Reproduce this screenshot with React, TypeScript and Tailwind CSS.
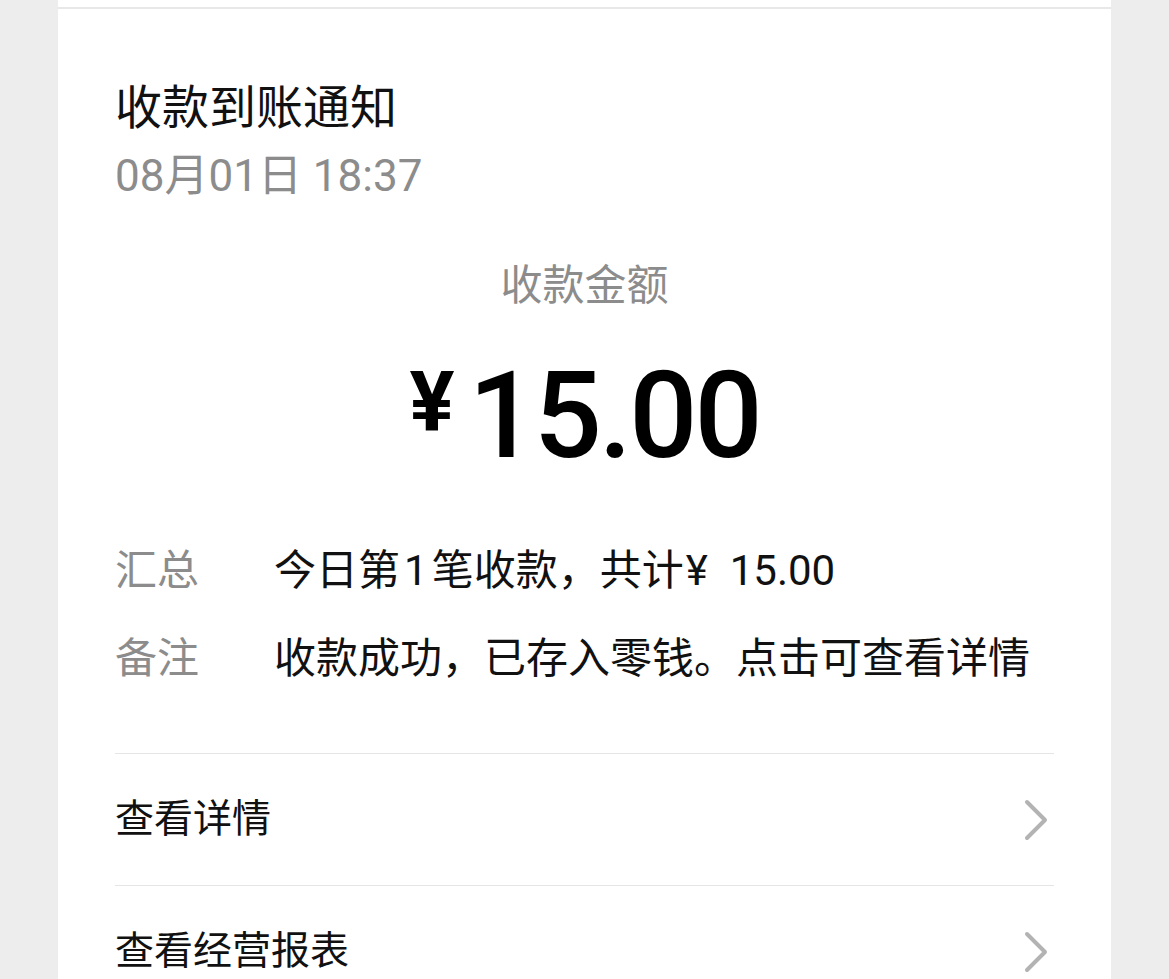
const font = "font-['Roboto','Noto_Sans_CJK_SC',sans-serif]";

function Chevron() {
  return (
    <svg width="26" height="42" viewBox="0 0 26 42" fill="none">
      <path d="M4 3 L22 21 L4 39" stroke="#b3b3b3" strokeWidth="4" strokeLinecap="round" strokeLinejoin="round" />
    </svg>
  );
}

function InfoRow({ label, children }: { label: string; children: React.ReactNode }) {
  return (
    <div className="flex h-[88px] items-center text-[42px]">
      <span className="w-[159px] shrink-0 text-[#8c8c8c]">{label}</span>
      <span className="whitespace-nowrap text-[#111]">{children}</span>
    </div>
  );
}

function MenuRow({ label }: { label: string }) {
  return (
    <div className="flex h-[132px] items-center justify-between border-t border-[#e5e5e5] pr-[5px]">
      <span className="text-[39px] text-[#111]">{label}</span>
      <Chevron />
    </div>
  );
}

export default function App() {
  return (
    <div className={`min-h-screen bg-[#ededed] ${font}`}>
      <div className="mx-auto min-h-screen w-[1053px] bg-white">
        <div className="h-[9px] border-b-2 border-[#e8e8e8]" />
        <div className="px-[57px]">
          <div className="mt-[69px] text-[47px] leading-[60px] text-[#111]">收款到账通知</div>
          <div className="mt-[12px] text-[44px] leading-[52px] text-[#8c8c8c]">08月01日 18:37</div>

          <div className="mt-[58px] text-center text-[42px] leading-[52px] text-[#8c8c8c]">收款金额</div>
          <div className="mt-[44px] flex items-start justify-center text-black">
            <span className="mr-[14px] mt-[5px] text-[84px] font-bold leading-none">¥</span>
            <span className="text-[120px] font-medium leading-none tracking-[-3px]">15.00</span>
          </div>

          <div className="mt-[50px]">
            <InfoRow label="汇总">
              今日第<span className="mx-[4px]">1</span>笔收款，共计<span className="ml-[2px]">¥</span>
              <span className="ml-[22px]">15.00</span>
            </InfoRow>
            <InfoRow label="备注">收款成功，已存入零钱。点击可查看详情</InfoRow>
          </div>

          <div className="mt-[51px]">
            <MenuRow label="查看详情" />
            <MenuRow label="查看经营报表" />
          </div>
        </div>
      </div>
    </div>
  );
}
